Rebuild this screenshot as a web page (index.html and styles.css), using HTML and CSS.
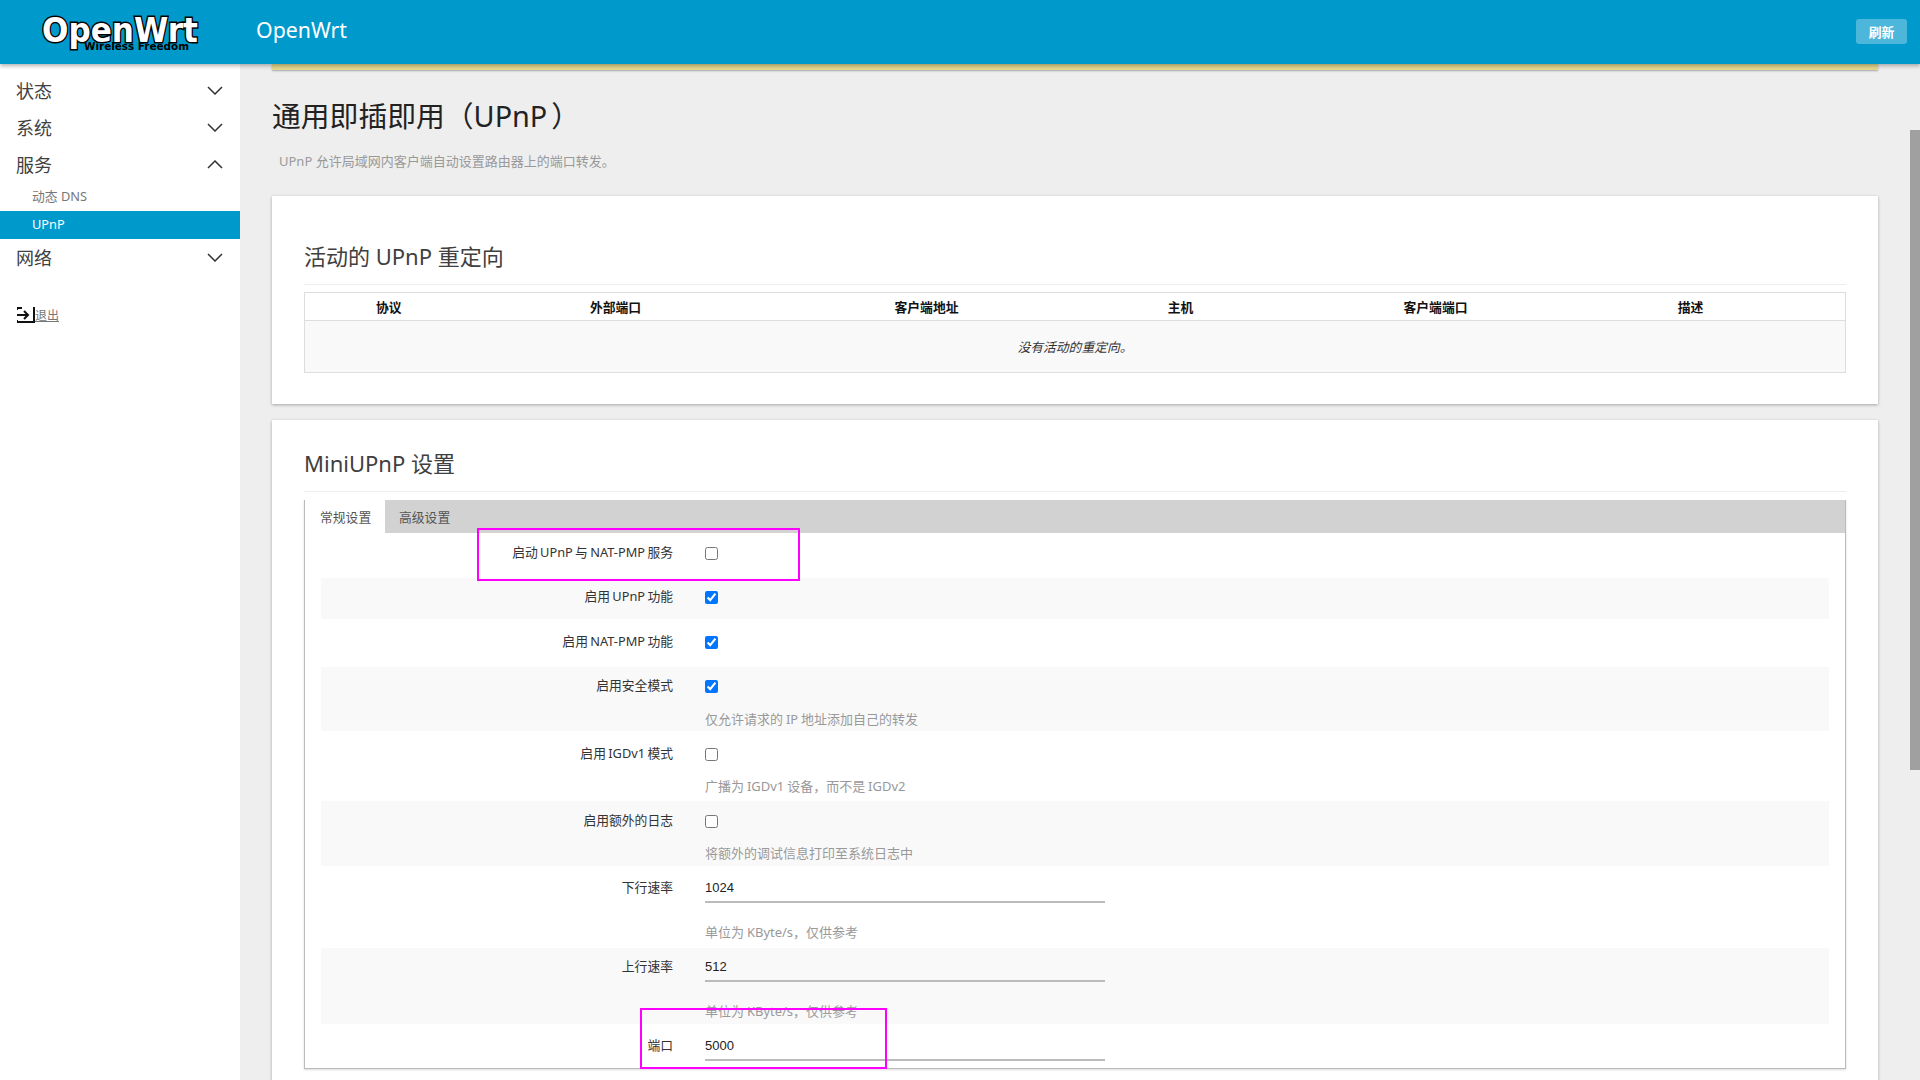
FILE: index.html
```html
<!DOCTYPE html>
<html lang="zh-CN">
  <head>
    <meta charset="UTF-8" />
    <title>OpenWrt - 通用即插即用（UPnP）</title>
    <link rel="stylesheet" href="styles.css">
  </head>
  <body>
    <header class="topbar">
      <a class="logo" href="#">
        <svg width="240" height="64" viewBox="0 0 240 64">
          <text class="logo-main" x="42" y="42" textLength="156" lengthAdjust="spacingAndGlyphs">OpenWrt</text>
          <text class="logo-sub" x="84" y="50" textLength="105" lengthAdjust="spacingAndGlyphs">Wireless Freedom</text>
        </svg>
      </a>
      <span class="brand">OpenWrt</span>
      <button class="refresh" type="button">刷新</button>
    </header>

    <div class="layout">
      <nav class="sidebar">
        <ul class="menu">
          <li class="menu-item">状态
            <svg class="chevron" viewBox="0 0 16 9"><polyline points="1,1 8,8 15,1" /></svg>
          </li>
          <li class="menu-item">系统
            <svg class="chevron" viewBox="0 0 16 9"><polyline points="1,1 8,8 15,1" /></svg>
          </li>
          <li class="menu-item">服务
            <svg class="chevron" viewBox="0 0 16 9"><polyline points="1,8 8,1 15,8" /></svg>
          </li>
          <li class="sub-item">动态 DNS</li>
          <li class="sub-item active">UPnP</li>
          <li class="menu-item">网络
            <svg class="chevron" viewBox="0 0 16 9"><polyline points="1,1 8,8 15,1" /></svg>
          </li>
        </ul>
        <a class="logout" href="#">
          <svg class="logout-icon" width="18" height="16" viewBox="0 0 18 16">
            <path d="M0 1h5M0 15h17M17 0v16M0 0v3M0 13v3" />
            <path d="M0 8h11M7 4l4 4-4 4" />
          </svg>退出</a>
      </nav>

      <main class="content">
        <div class="alert-strip"></div>
        <h2 class="page-title">通用即插即用（UPnP<span class="paren-close">）</span></h2>
        <p class="page-desc">UPnP 允许局域网内客户端自动设置路由器上的端口转发。</p>

        <section class="card card-redirects">
          <h3>活动的 UPnP 重定向</h3>
          <table class="table">
            <thead>
              <tr>
                <th>协议</th>
                <th>外部端口</th>
                <th>客户端地址</th>
                <th>主机</th>
                <th>客户端端口</th>
                <th>描述</th>
                <th></th>
              </tr>
            </thead>
            <tbody>
              <tr>
                <td class="empty" colspan="7">没有活动的重定向。</td>
              </tr>
            </tbody>
          </table>
        </section>

        <section class="card card-settings">
          <h3>MiniUPnP 设置</h3>
          <div class="tabbed">
            <ul class="tabs">
              <li class="tab active">常规设置</li>
              <li class="tab">高级设置</li>
            </ul>
            <div class="rows">
              <div class="row">
                <label class="row-label">启动 UPnP 与 NAT-PMP 服务</label>
                <div class="row-value"><div class="check-line"><input type="checkbox" /></div></div>
              </div>
              <div class="row">
                <label class="row-label">启用 UPnP 功能</label>
                <div class="row-value"><div class="check-line"><input type="checkbox" checked /></div></div>
              </div>
              <div class="row">
                <label class="row-label">启用 NAT-PMP 功能</label>
                <div class="row-value"><div class="check-line"><input type="checkbox" checked /></div></div>
              </div>
              <div class="row">
                <label class="row-label">启用安全模式</label>
                <div class="row-value">
                  <div class="check-line"><input type="checkbox" checked /></div>
                  <div class="help">仅允许请求的 IP 地址添加自己的转发</div>
                </div>
              </div>
              <div class="row">
                <label class="row-label">启用 IGDv1 模式</label>
                <div class="row-value">
                  <div class="check-line"><input type="checkbox" /></div>
                  <div class="help help-tight">广播为 IGDv1 设备，而不是 IGDv2</div>
                </div>
              </div>
              <div class="row">
                <label class="row-label">启用额外的日志</label>
                <div class="row-value">
                  <div class="check-line"><input type="checkbox" /></div>
                  <div class="help help-tight">将额外的调试信息打印至系统日志中</div>
                </div>
              </div>
              <div class="row row-input">
                <label class="row-label">下行速率</label>
                <div class="row-value">
                  <input class="text-input" type="text" value="1024" />
                  <div class="help help-input">单位为 KByte/s，仅供参考</div>
                </div>
              </div>
              <div class="row row-input">
                <label class="row-label">上行速率</label>
                <div class="row-value">
                  <input class="text-input" type="text" value="512" />
                  <div class="help help-input">单位为 KByte/s，仅供参考</div>
                </div>
              </div>
              <div class="row row-input">
                <label class="row-label">端口</label>
                <div class="row-value">
                  <input class="text-input" type="text" value="5000" />
                </div>
              </div>
            </div>
          </div>
        </section>
      </main>
    </div>

    <div class="scroll-thumb"></div>
    <div class="mark mark-enable"></div>
    <div class="mark mark-port"></div>
  </body>
</html>
```

FILE: styles.css
```css
* {
  box-sizing: border-box;
}
html,
body {
  margin: 0;
  height: 100%;
  overflow: hidden;
}
body {
  position: relative;
  font-family: "Noto Sans", "Noto Sans CJK SC", sans-serif;
  font-size: 12.8px;
  color: #333;
  background: #eee;
}
ul {
  list-style: none;
  margin: 0;
  padding: 0;
}

/* top bar */
.topbar {
  position: relative;
  z-index: 2;
  display: flex;
  align-items: center;
  height: 64px;
  background: #0099cc;
  box-shadow: 0 2px 4px rgba(0, 0, 0, 0.3);
}
.logo {
  display: block;
  width: 240px;
  height: 64px;
  flex-shrink: 0;
}
.logo-main {
  font-family: "DejaVu Sans", sans-serif;
  font-weight: 700;
  font-size: 34px;
  fill: #fff;
  stroke: #000;
  stroke-width: 3px;
  paint-order: stroke;
}
.logo-sub {
  font-family: "DejaVu Sans", sans-serif;
  font-weight: 700;
  font-size: 10px;
  fill: #000;
}
.brand {
  margin-left: 16px;
  margin-top: -6px;
  font-size: 21.3px;
  color: #fff;
}
.refresh {
  margin-left: auto;
  margin-right: 13px;
  margin-top: -1px;
  width: 51px;
  height: 25px;
  padding: 0;
  border: none;
  border-radius: 3px;
  background: rgba(255, 255, 255, 0.3);
  color: #fff;
  font-family: inherit;
  font-size: 12.8px;
  font-weight: 700;
}

/* sidebar */
.layout {
  display: flex;
  height: calc(100vh - 64px);
}
.sidebar {
  width: 240px;
  flex-shrink: 0;
  padding-top: 8px;
  background: #fff;
}
.menu-item {
  display: flex;
  align-items: center;
  justify-content: space-between;
  height: 37px;
  padding: 0 17px 2px 16px;
  font-size: 18px;
  color: #404040;
}
.chevron {
  width: 16px;
  height: 9px;
  margin-top: 2px;
  fill: none;
  stroke: #333;
  stroke-width: 1.5;
}
.sub-item {
  height: 28px;
  padding-left: 32px;
  line-height: 26px;
  font-size: 12.8px;
  color: #777;
}
.sub-item.active {
  background: #0099cc;
  color: #fff;
}
.logout {
  display: inline-flex;
  align-items: center;
  margin: 30px 0 0 17px;
  white-space: nowrap;
  font-size: 12px;
  color: #777;
  text-decoration: underline;
}
.logout-icon {
  flex-shrink: 0;
  fill: none;
  stroke: #111;
  stroke-width: 2;
}

/* content */
.content {
  flex: 1;
  min-width: 0;
  padding: 0 42px 0 32px;
  overflow: hidden;
}
.alert-strip {
  height: 6px;
  background: #e6d98f;
  box-shadow: 0 1px 2px rgba(0, 0, 0, 0.3);
}
.page-title {
  margin: 26px 0 0;
  height: 40px;
  font-size: 28.8px;
  font-weight: 400;
  line-height: 40px;
  color: #222;
}
.paren-close {
  margin-left: 4px;
}
.page-desc {
  margin: 15px 0 0 7px;
  font-size: 13px;
  line-height: 20px;
  color: #999;
}
.card {
  margin-top: 25px;
  padding: 0 32px;
  background: #fff;
  box-shadow: 0 1px 3px rgba(0, 0, 0, 0.3);
}
.card h3 {
  margin: 0;
  height: 45px;
  border-bottom: 1px solid #eee;
  font-size: 22px;
  font-weight: 400;
  line-height: 32px;
  color: #404040;
}
.card-redirects {
  height: 208px;
  padding-top: 44px;
}
.card-settings {
  margin-top: 16px;
  height: 700px;
  padding-top: 27px;
}

/* table */
.table {
  width: 100%;
  margin-top: 7px;
  border: 1px solid #ddd;
  border-collapse: collapse;
  table-layout: fixed;
}
.table th {
  height: 28px;
  padding: 0;
  border-bottom: 1px solid #ddd;
  background: #fff;
  font-size: 12.8px;
  font-weight: 700;
  color: #111;
}
.table th:nth-child(1) { width: 168px; }
.table th:nth-child(2) { width: 286px; }
.table th:nth-child(3) { width: 336px; }
.table th:nth-child(4) { width: 172px; }
.table th:nth-child(5) { width: 338px; }
.table th:nth-child(6) { width: 172px; }
.table .empty {
  height: 52px;
  padding: 0;
  background: #f9f9f9;
  text-align: center;
  font-style: italic;
  color: #333;
}

/* tabs + settings rows */
.tabbed {
  margin-top: 8px;
  height: 569px;
  border: 1px solid #bbb;
  border-top: none;
  box-shadow: 0 1px 2px rgba(0, 0, 0, 0.15);
}
.tabs {
  display: flex;
  height: 33px;
  background: #d2d2d2;
}
.tab {
  padding: 0 14px;
  line-height: 34px;
  white-space: nowrap;
  color: #555;
}
.tab.active {
  width: 80px;
  padding: 0 0 0 15px;
  background: #fff;
}
.rows {
  padding: 0 16px;
}
.row {
  display: flex;
  gap: 32px;
}
.row:nth-child(even) {
  background: #f9f9f9;
}
.row:nth-child(1) { height: 45px; padding-top: 11px; }
.row:nth-child(2) { height: 41px; padding-top: 10px; }
.row:nth-child(3) { height: 48px; padding-top: 14px; }
.row:nth-child(4) { height: 64px; padding-top: 10px; }
.row:nth-child(5) { height: 70px; padding-top: 14px; }
.row:nth-child(6) { height: 65px; padding-top: 11px; }
.row:nth-child(7) { height: 82px; padding-top: 6px; }
.row:nth-child(8) { height: 76px; padding-top: 3px; }
.row:nth-child(9) { height: 45px; padding-top: 6px; }
.row-label {
  width: 352px;
  flex-shrink: 0;
  text-align: right;
  word-spacing: -1px;
  line-height: 16px;
  color: #333;
}
.row-input .row-label {
  margin-top: 7px;
}
.row-value {
  flex: 1;
  min-width: 0;
}
.check-line {
  height: 20px;
  padding-top: 3px;
}
.check-line input {
  display: block;
  width: 13px;
  height: 13px;
  margin: 0;
}
.help {
  margin-top: 12px;
  font-size: 13px;
  word-spacing: -0.5px;
  line-height: 20px;
  color: #999;
}
.help-tight {
  margin-top: 11px;
}
.help-input {
  margin-top: 19px;
}
.text-input {
  display: block;
  width: 400px;
  height: 31px;
  padding: 2px 0 0;
  border: none;
  border-bottom: 2px solid #bbb;
  outline: none;
  background: transparent;
  font-family: "Liberation Sans", Arial, sans-serif;
  font-size: 13px;
  color: #222;
}

/* things lying over the page */
.scroll-thumb {
  position: absolute;
  top: 130px;
  right: 0;
  width: 10px;
  height: 640px;
  background: #a0a0a0;
}
.mark {
  position: absolute;
  z-index: 3;
  border: 2px solid #ff00ff;
}
.mark-enable {
  left: 477px;
  top: 528px;
  width: 323px;
  height: 53px;
}
.mark-port {
  left: 640px;
  top: 1008px;
  width: 247px;
  height: 61px;
}
```
